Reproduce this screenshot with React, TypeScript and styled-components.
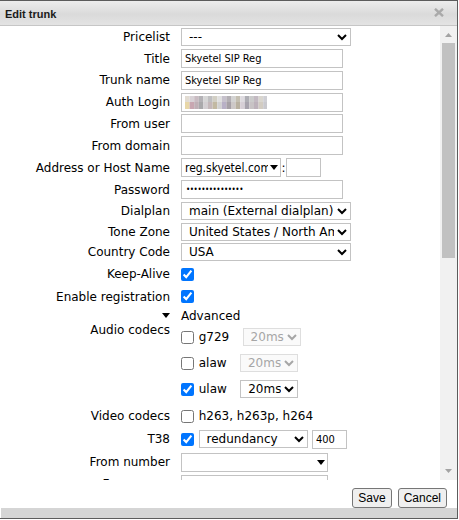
import React from "react";
import styled, { createGlobalStyle } from "styled-components";

const Global = createGlobalStyle`
  html, body { margin: 0; padding: 0; background: #fff; }
  body { font-family: "DejaVu Sans", Verdana, sans-serif; font-size: 12px; color: #000; }
`;

const Window = styled.div`
  width: 458px;
  height: 519px;
  box-sizing: border-box;
  border-top: 1px solid #5c5c5c;
  border-right: 1px solid #5c5c5c;
  border-bottom: 1px solid #5c5c5c;
  display: flex;
  flex-direction: column;
  background: #fff;
  overflow: hidden;
`;

const TitleBar = styled.div`
  height: 25px;
  flex: none;
  box-sizing: border-box;
  display: flex;
  align-items: center;
  justify-content: space-between;
  padding: 0 13px 0 5px;
  background: linear-gradient(#ededed, #dadada 55%, #e3e3e3);
  border-bottom: 1px solid #c6c6c6;
`;

const Title = styled.span`
  font: bold 11px "Liberation Sans", Arial, sans-serif;
  color: #1a1a1a;
  margin-top: 1px;
`;

const CloseIcon = styled.svg`
  display: block;
  margin-top: -2px;
`;

const Body = styled.div`
  height: 454px;
  flex: none;
  display: flex;
`;

const Scroller = styled.div`
  flex: 1;
  min-width: 0;
  overflow: hidden;
`;

const ScrollBar = styled.div`
  width: 17px;
  flex: none;
  display: flex;
  flex-direction: column;
  background: #f1f1f1;
`;

const ScrollButton = styled.div<{ $pad: string }>`
  height: 17px;
  flex: none;
  display: flex;
  justify-content: center;
  align-items: flex-start;
  padding-top: ${(p) => p.$pad};
  box-sizing: border-box;
`;

const ScrollTrack = styled.div`
  flex: 1;
  padding: 0 2px;
  display: flex;
  flex-direction: column;
`;

const ScrollThumb = styled.div`
  height: 215px;
  background: #c1c1c1;
  flex: none;
`;

const Form = styled.div`
  display: grid;
  grid-template-columns: 170px 1fr;
  column-gap: 11px;
  row-gap: 2.75px;
  padding: 2.3px 0 0;
  align-items: center;
`;

const Label = styled.div<{ $top?: boolean; $lh?: number }>`
  text-align: right;
  white-space: nowrap;
  line-height: ${(p) => p.$lh ?? 14}px;
  align-self: ${(p) => (p.$top ? "start" : "center")};
`;

const Cell = styled.div<{ $h?: number; $gap?: number }>`
  display: flex;
  align-items: center;
  min-height: ${(p) => p.$h ?? 0}px;
  gap: ${(p) => p.$gap ?? 0}px;
`;

const inputFont = `11px "DejaVu Sans Condensed", "Liberation Sans", sans-serif`;

const TextInput = styled.input<{ $w: number }>`
  width: ${(p) => p.$w}px;
  height: 19px;
  box-sizing: border-box;
  border: 1px solid #c3c3c3;
  border-radius: 0;
  padding: 0 3px;
  margin: 0;
  font: ${inputFont};
  color: #000;
  background: #fff;
  outline: none;
`;

const PasswordInput = styled(TextInput)`
  font-size: 8px;
  letter-spacing: -0.45px;
  padding-left: 4px;
`;

const FieldBox = styled.div<{ $w: number }>`
  width: ${(p) => p.$w}px;
  height: 19px;
  box-sizing: border-box;
  border: 1px solid #c3c3c3;
  display: flex;
  align-items: center;
  padding: 0 3px;
`;

const Select = styled.select<{ $w: number }>`
  width: ${(p) => p.$w}px;
  height: 18px;
  box-sizing: border-box;
  border: 1px solid #c3c3c3;
  border-radius: 0;
  background-color: #fff;
  font: 12px "DejaVu Sans", Verdana, sans-serif;
  color: #000;
  padding: 0 0 0 3px;
  margin: 0;
  outline: none;
  &:disabled {
    color: #a6a6a6;
    border-color: #dedede;
    background-color: #fafafa;
    opacity: 1;
  }
`;

const Combo = styled.div<{ $w: number }>`
  width: ${(p) => p.$w}px;
  height: 19.5px;
  box-sizing: border-box;
  border: 1px solid #c3c3c3;
  display: flex;
  align-items: center;
  gap: 2px;
  padding: 0 2.5px 0 3px;
  background: #fff;
`;

const ComboText = styled.span`
  flex: 1;
  min-width: 0;
  overflow: hidden;
  white-space: nowrap;
  font: ${inputFont};
  font-size: 12px;
`;

const Colon = styled.span`
  display: inline-block;
  width: 5px;
  text-align: center;
`;

const Check = styled.input`
  width: 13px;
  height: 13px;
  margin: 0;
  flex: none;
`;

const CheckLabel = styled.label`
  display: inline-flex;
  align-items: center;
  gap: 4.7px;
  white-space: nowrap;
  line-height: 14px;
`;

const Toggle = styled.div`
  display: flex;
  justify-content: flex-end;
  align-items: center;
  height: 12px;
`;

const ToggleText = styled.div`
  line-height: 12px;
  height: 12px;
`;

const CodecList = styled.div`
  display: flex;
  flex-direction: column;
  gap: 6px;
  padding: 3.2px 0 4px;
`;

const CodecLine = styled.div`
  display: flex;
  align-items: center;
  height: 20px;
`;

const CodecSelect = styled(Select)`
  margin-left: 13.4px;
`;

const Footer = styled.div`
  height: 28px;
  flex: none;
  box-sizing: border-box;
  display: flex;
  justify-content: flex-end;
  align-items: flex-start;
  gap: 6px;
  padding: 8px 10px 0 0;
`;

const Button = styled.button`
  height: 20px;
  padding: 0 5px;
  margin: 0;
  font: 12px "Liberation Sans", Arial, sans-serif;
  color: #000;
  background: #efefef;
  border: 1px solid #767676;
  border-radius: 3px;
`;

const BottomStrip = styled.div`
  height: 10px;
  flex: none;
  background: #d5d5d5;
  margin-left: 1px;
`;

const Triangle = ({ w = 8, h = 5, up = false, color = "#000" }: { w?: number; h?: number; up?: boolean; color?: string }) => (
  <svg width={w} height={h} viewBox={`0 0 ${w} ${h}`} style={{ flex: "none", display: "block" }}>
    <polygon points={up ? `0,${h} ${w},${h} ${w / 2},0` : `0,0 ${w},0 ${w / 2},${h}`} fill={color} />
  </svg>
);

const mosaicTop = [
  "#e2dcd2", "#d8d2d6", "#c9bcc2", "#b4b2b6", "#d6d6d6", "#bfbfc1", "#d2cfc4", "#e0e0e0",
  "#c6c1cc", "#b3afb4", "#d3d3d3", "#c4bfb2", "#dedbe0", "#aeaeb4", "#cbcbcb", "#c3bac2",
  "#d9d6cf", "#cfcfd4",
];
const mosaicBottom = [
  "#e8d7a8", "#c8a7b1", "#bfb0b6", "#a9a9ab", "#d3cfd2", "#c4b8ba", "#c2b9a2", "#d1d1d1",
  "#b8b0c6", "#a6a0a6", "#cdc8c8", "#b9b1a1", "#d6cfd6", "#a7a3ad", "#c8c3c5", "#bdb2bb",
  "#d2ccc2", "#c9c9ce",
];

const Mosaic = () => (
  <svg width={82} height={13} viewBox="0 0 82 13" style={{ display: "block" }}>
    {mosaicTop.map((c, i) => (
      <rect key={"t" + i} x={i * 4.6} y={0} width={4.6} height={6} fill={c} />
    ))}
    {mosaicBottom.map((c, i) => (
      <rect key={"b" + i} x={i * 4.6} y={6} width={4.6} height={7} fill={c} />
    ))}
  </svg>
);

const codecs = [
  { name: "g729", on: false },
  { name: "alaw", on: false },
  { name: "ulaw", on: true },
];

export default function App() {
  return (
    <>
      <Global />
      <Window>
        <TitleBar>
          <Title>Edit trunk</Title>
          <CloseIcon width="10" height="9" viewBox="0 0 10 9">
            <path d="M1 0.8 L9 8.2 M9 0.8 L1 8.2" stroke="#a9a9a9" strokeWidth="2.4" />
          </CloseIcon>
        </TitleBar>
        <Body>
          <Scroller>
            <Form>
              <Label>Pricelist</Label>
              <Cell>
                <Select $w={170} defaultValue="---">
                  <option>---</option>
                </Select>
              </Cell>

              <Label>Title</Label>
              <Cell>
                <TextInput $w={162} defaultValue="Skyetel SIP Reg" />
              </Cell>

              <Label>Trunk name</Label>
              <Cell>
                <TextInput $w={162} defaultValue="Skyetel SIP Reg" />
              </Cell>

              <Label>Auth Login</Label>
              <Cell>
                <FieldBox $w={162}>
                  <Mosaic />
                </FieldBox>
              </Cell>

              <Label>From user</Label>
              <Cell>
                <TextInput $w={162} />
              </Cell>

              <Label>From domain</Label>
              <Cell>
                <TextInput $w={162} />
              </Cell>

              <Label>Address or Host Name</Label>
              <Cell>
                <Combo $w={100}>
                  <ComboText>reg.skyetel.com</ComboText>
                  <Triangle />
                </Combo>
                <Colon>:</Colon>
                <TextInput $w={35} />
              </Cell>

              <Label>Password</Label>
              <Cell>
                <PasswordInput $w={162} type="password" defaultValue="skyetelpasswd12" />
              </Cell>

              <Label>Dialplan</Label>
              <Cell>
                <Select $w={170}>
                  <option>main (External dialplan)</option>
                </Select>
              </Cell>

              <Label>Tone Zone</Label>
              <Cell>
                <Select $w={170}>
                  <option>United States / North America</option>
                </Select>
              </Cell>

              <Label>Country Code</Label>
              <Cell>
                <Select $w={170}>
                  <option>USA</option>
                </Select>
              </Cell>

              <Label>Keep-Alive</Label>
              <Cell $h={20}>
                <Check type="checkbox" defaultChecked />
              </Cell>

              <Label>Enable registration</Label>
              <Cell $h={20}>
                <Check type="checkbox" defaultChecked />
              </Cell>

              <Toggle>
                <Triangle w={8} h={5} />
              </Toggle>
              <ToggleText>Advanced</ToggleText>

              <Label $top $lh={12}>Audio codecs</Label>
              <CodecList>
                {codecs.map((c) => (
                  <CodecLine key={c.name}>
                    <CheckLabel>
                      <Check type="checkbox" defaultChecked={c.on} />
                      {c.name}
                    </CheckLabel>
                    <CodecSelect $w={58} disabled={!c.on}>
                      <option>20ms</option>
                    </CodecSelect>
                  </CodecLine>
                ))}
              </CodecList>

              <Label>Video codecs</Label>
              <Cell $h={20}>
                <CheckLabel>
                  <Check type="checkbox" />
                  h263, h263p, h264
                </CheckLabel>
              </Cell>

              <Label>T38</Label>
              <Cell $h={21} $gap={4.5}>
                <Check type="checkbox" defaultChecked />
                <Select $w={109}>
                  <option>redundancy</option>
                </Select>
                <TextInput $w={35} defaultValue="400" />
              </Cell>

              <Label>From number</Label>
              <Cell>
                <Combo $w={147}>
                  <ComboText />
                  <Triangle />
                </Combo>
              </Cell>

              <Label>From name</Label>
              <Cell>
                <TextInput $w={147} />
              </Cell>
            </Form>
          </Scroller>
          <ScrollBar>
            <ScrollButton $pad="7px">
              <Triangle w={7} h={4} up color="#a3a3a3" />
            </ScrollButton>
            <ScrollTrack>
              <ScrollThumb />
            </ScrollTrack>
            <ScrollButton $pad="6px">
              <Triangle w={7} h={4} color="#a3a3a3" />
            </ScrollButton>
          </ScrollBar>
        </Body>
        <Footer>
          <Button>Save</Button>
          <Button>Cancel</Button>
        </Footer>
        <BottomStrip />
      </Window>
    </>
  );
}
